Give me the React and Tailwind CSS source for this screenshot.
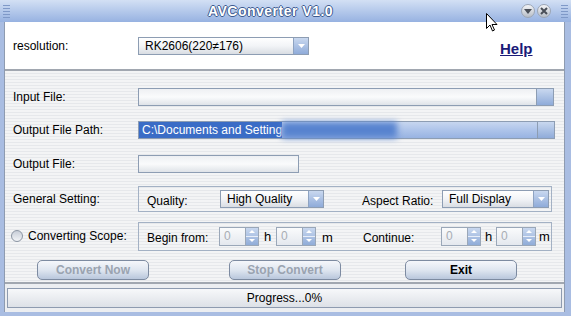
import React from "react";

const font = { fontFamily: '"Liberation Sans", Arial, sans-serif' };

function Arrow({ w = "w-[15px]" }) {
  return (
    <div className={`${w} h-full flex items-center justify-center border-l border-[#8ea3c2] bg-gradient-to-b from-[#c9d8ef] to-[#8fabd9]`}>
      <svg width="7" height="4" viewBox="0 0 7 4"><path d="M0 0h7L3.5 4z" fill="#ffffff" /></svg>
    </div>
  );
}

function Combo({ text, w }) {
  return (
    <div className={`${w} h-[18px] flex border border-[#8d9db3] bg-gradient-to-b from-[#ffffff] via-[#f2f4f7] to-[#d9dde3]`}>
      <div className="flex-1 flex items-center pl-[6px] text-[12px] text-black leading-none">{text}</div>
      <Arrow />
    </div>
  );
}

function Spinner() {
  return (
    <div className="w-[40px] h-[19px] flex border border-[#9aa7b8] bg-gradient-to-b from-[#fafbfc] to-[#e4e8ee]">
      <div className="flex-1 flex items-center pl-[4px] text-[12px] text-[#a8adb4] leading-none">0</div>
      <div className="w-[13px] flex flex-col border-l border-[#9aa7b8] bg-gradient-to-b from-[#c9d8ef] to-[#90acd8]">
        <div className="flex-1 flex items-center justify-center border-b border-[#e8eef8]">
          <svg width="6" height="3" viewBox="0 0 6 3"><path d="M0 3h6L3 0z" fill="#ffffff" /></svg>
        </div>
        <div className="flex-1 flex items-center justify-center">
          <svg width="6" height="3" viewBox="0 0 6 3"><path d="M0 0h6L3 3z" fill="#ffffff" /></svg>
        </div>
      </div>
    </div>
  );
}

function Btn({ label, dim, ml }) {
  return (
    <div
      className={`${ml} w-[112px] h-[20px] flex items-center justify-center rounded-[5px] border border-[#7d8ba1] bg-gradient-to-b from-[#f5f7fb] via-[#dfe6f0] to-[#b9c7dc] text-[12px] font-bold leading-none ${dim ? "text-[#9aa3b0]" : "text-black"}`}
    >
      {label}
    </div>
  );
}

export default function App() {
  return (
    <div
      style={font}
      className="relative w-[571px] h-[316px] flex flex-col bg-[#a9bde2] overflow-hidden"
    >
      {/* title bar */}
      <div className="relative h-[22px] flex items-center justify-center bg-gradient-to-b from-[#d3e0f4] to-[#97b2e1]">
        <div className="absolute left-[3px] top-[5px] flex flex-col gap-[2px]">
          <div className="w-[7px] h-[1px] bg-[#7f99c8]" />
          <div className="w-[7px] h-[1px] bg-[#7f99c8]" />
          <div className="w-[7px] h-[1px] bg-[#7f99c8]" />
          <div className="w-[7px] h-[1px] bg-[#7f99c8]" />
          <div className="w-[7px] h-[1px] bg-[#7f99c8]" />
        </div>
        <div className="ml-[-30px] text-[14px] font-bold text-white tracking-[0.5px] [text-shadow:1px_0_0_#3d5a8f,-1px_0_0_#3d5a8f,0_1px_0_#3d5a8f,0_-1px_0_#3d5a8f]">
          AVConverter V1.0
        </div>
        <div className="absolute left-[521px] top-[4px] flex gap-[2px]">
          <div className="w-[14px] h-[14px] rounded-full border border-[#9ca6b5] bg-gradient-to-b from-[#f4f5f7] to-[#b8bec8] flex items-center justify-center">
            <svg width="8" height="5" viewBox="0 0 8 5"><path d="M0 0h8L4 5z" fill="#4a4f58" /></svg>
          </div>
          <div className="w-[14px] h-[14px] rounded-full border border-[#9ca6b5] bg-gradient-to-b from-[#f4f5f7] to-[#b8bec8] flex items-center justify-center">
            <svg width="8" height="8" viewBox="0 0 8 8"><path d="M1 1l6 6M7 1l-6 6" stroke="#4a4f58" strokeWidth="2" /></svg>
          </div>
        </div>
        <div className="absolute left-[561px] top-[5px] flex flex-col gap-[2px]">
          <div className="w-[7px] h-[1px] bg-[#7f99c8]" />
          <div className="w-[7px] h-[1px] bg-[#7f99c8]" />
          <div className="w-[7px] h-[1px] bg-[#7f99c8]" />
          <div className="w-[7px] h-[1px] bg-[#7f99c8]" />
          <div className="w-[7px] h-[1px] bg-[#7f99c8]" />
        </div>
      </div>

      {/* body */}
      <div className="flex-1 flex flex-col ml-[4px] mr-[6px] mb-[4px] bg-[#eceef1] border-l border-r border-[#8e9bb0]">
        {/* top white */}
        <div className="h-[47px] flex items-center bg-white">
          <div className="w-[133px] pl-[8px] text-[12px] text-black leading-none">resolution:</div>
          <Combo text="RK2606(220≠176)" w="w-[171px]" />
          <div className="ml-[191px] mt-[5px] text-[15px] font-bold text-[#1b1b78] underline leading-none">Help</div>
        </div>

        {/* striped panel */}
        <div className="h-[215px] flex flex-col border-t-2 border-b-2 border-[#a1a7b0] bg-[repeating-linear-gradient(180deg,#f3f4f5_0px,#f3f4f5_2px,#e6e8eb_2px,#e6e8eb_3px)] pt-[9px]">
          {/* Input File */}
          <div className="h-[33px] flex items-center">
            <div className="w-[133px] pl-[8px] text-[12px] leading-none text-black">Input File:</div>
            <div className="w-[416px] h-[18px] flex border border-[#8d9db3] bg-gradient-to-b from-[#eef0f3] via-[#fafbfc] to-[#dfe3e8]">
              <div className="flex-1" />
              <div className="w-[17px] border-l border-[#8d9db3] bg-gradient-to-b from-[#c9d8ef] to-[#8fabd9]" />
            </div>
          </div>
          {/* Output File Path */}
          <div className="h-[33px] flex items-center">
            <div className="w-[133px] pl-[8px] text-[12px] leading-none text-black">Output File Path:</div>
            <div className="w-[417px] h-[18px] flex border border-[#8d9db3] bg-gradient-to-b from-[#c7d6ef] via-[#aec4ea] to-[#98b3e2]">
              <div className="flex items-center bg-[#3a6cc6] text-white text-[12px] leading-none pl-[3px] h-full">C:\Documents and Setting</div>
              <div className="w-[115px] h-full bg-[#5783cf] blur-[3px]" />
              <div className="flex-1" />
              <div className="w-[17px] border-l border-[#8d9db3] bg-gradient-to-b from-[#c9d8ef] to-[#8fabd9]" />
            </div>
          </div>
          {/* Output File */}
          <div className="h-[34px] flex items-center pt-[1px]">
            <div className="w-[133px] pl-[8px] text-[12px] leading-none text-black">Output File:</div>
            <div className="w-[161px] h-[18px] border border-[#8d9db3] bg-gradient-to-b from-[#eef0f3] via-[#fafbfc] to-[#dfe3e8]" />
          </div>
          {/* General Setting */}
          <div className="h-[38px] flex items-center">
            <div className="w-[133px] pl-[8px] text-[12px] leading-none text-black">General Setting:</div>
            <div className="w-[414px] h-[26px] flex items-center border border-[#a3b1c4] pl-[8px]">
              <div className="w-[73px] text-[12px] leading-none mt-[3px]">Quality:</div>
              <Combo text="High Quality" w="w-[104px]" />
              <div className="ml-[38px] w-[80px] text-[12px] leading-none mt-[3px]">Aspect Ratio:</div>
              <Combo text="Full Display" w="w-[107px]" />
            </div>
          </div>
          {/* Converting Scope */}
          <div className="h-[36px] flex items-center">
            <div className="w-[133px] pl-[6px] flex items-center gap-[5px] text-[12px] leading-none text-black">
              <div className="w-[12px] h-[12px] rounded-full border border-[#8b95a3] bg-gradient-to-b from-[#c8ced8] to-[#f2f4f7]" />
              Converting Scope:
            </div>
            <div className="w-[414px] h-[29px] flex items-center border border-[#a3b1c4] pl-[8px] text-[12px] leading-none">
              <div className="w-[72px] mt-[3px]">Begin from:</div>
              <Spinner />
              <div className="w-[17px] text-center text-[13px]">h</div>
              <Spinner />
              <div className="w-[47px] pl-[6px] text-[13px] mt-[2px]">m</div>
              <div className="w-[78px] mt-[3px]">Continue:</div>
              <Spinner />
              <div className="w-[15px] text-center text-[13px]">h</div>
              <Spinner />
              <div className="pl-[3px] text-[13px]">m</div>
            </div>
          </div>
          {/* Buttons */}
          <div className="h-[26px] flex items-end">
            <Btn label="Convert Now" dim ml="ml-[32px]" />
            <Btn label="Stop Convert" dim ml="ml-[80px]" />
            <Btn label="Exit" ml="ml-[64px]" />
          </div>
        </div>

        {/* progress */}
        <div className="flex-1 flex items-center px-[2px] pt-[1px] pb-[2px]">
          <div className="w-full h-[20px] flex items-center justify-center border border-[#8e9bb0] bg-gradient-to-b from-[#f7f8fa] to-[#dde1e7] text-[12px] leading-none text-black">
            Progress...0%
          </div>
        </div>
      </div>

      {/* cursor */}
      <svg className="absolute left-[486px] top-[13px]" width="12" height="19" viewBox="0 0 12 19">
        <path d="M0.5 0.5v15l3.5-3.5 2.5 6 2-1-2.5-5.5h5z" fill="#ffffff" stroke="#000000" strokeWidth="1" />
      </svg>
    </div>
  );
}
